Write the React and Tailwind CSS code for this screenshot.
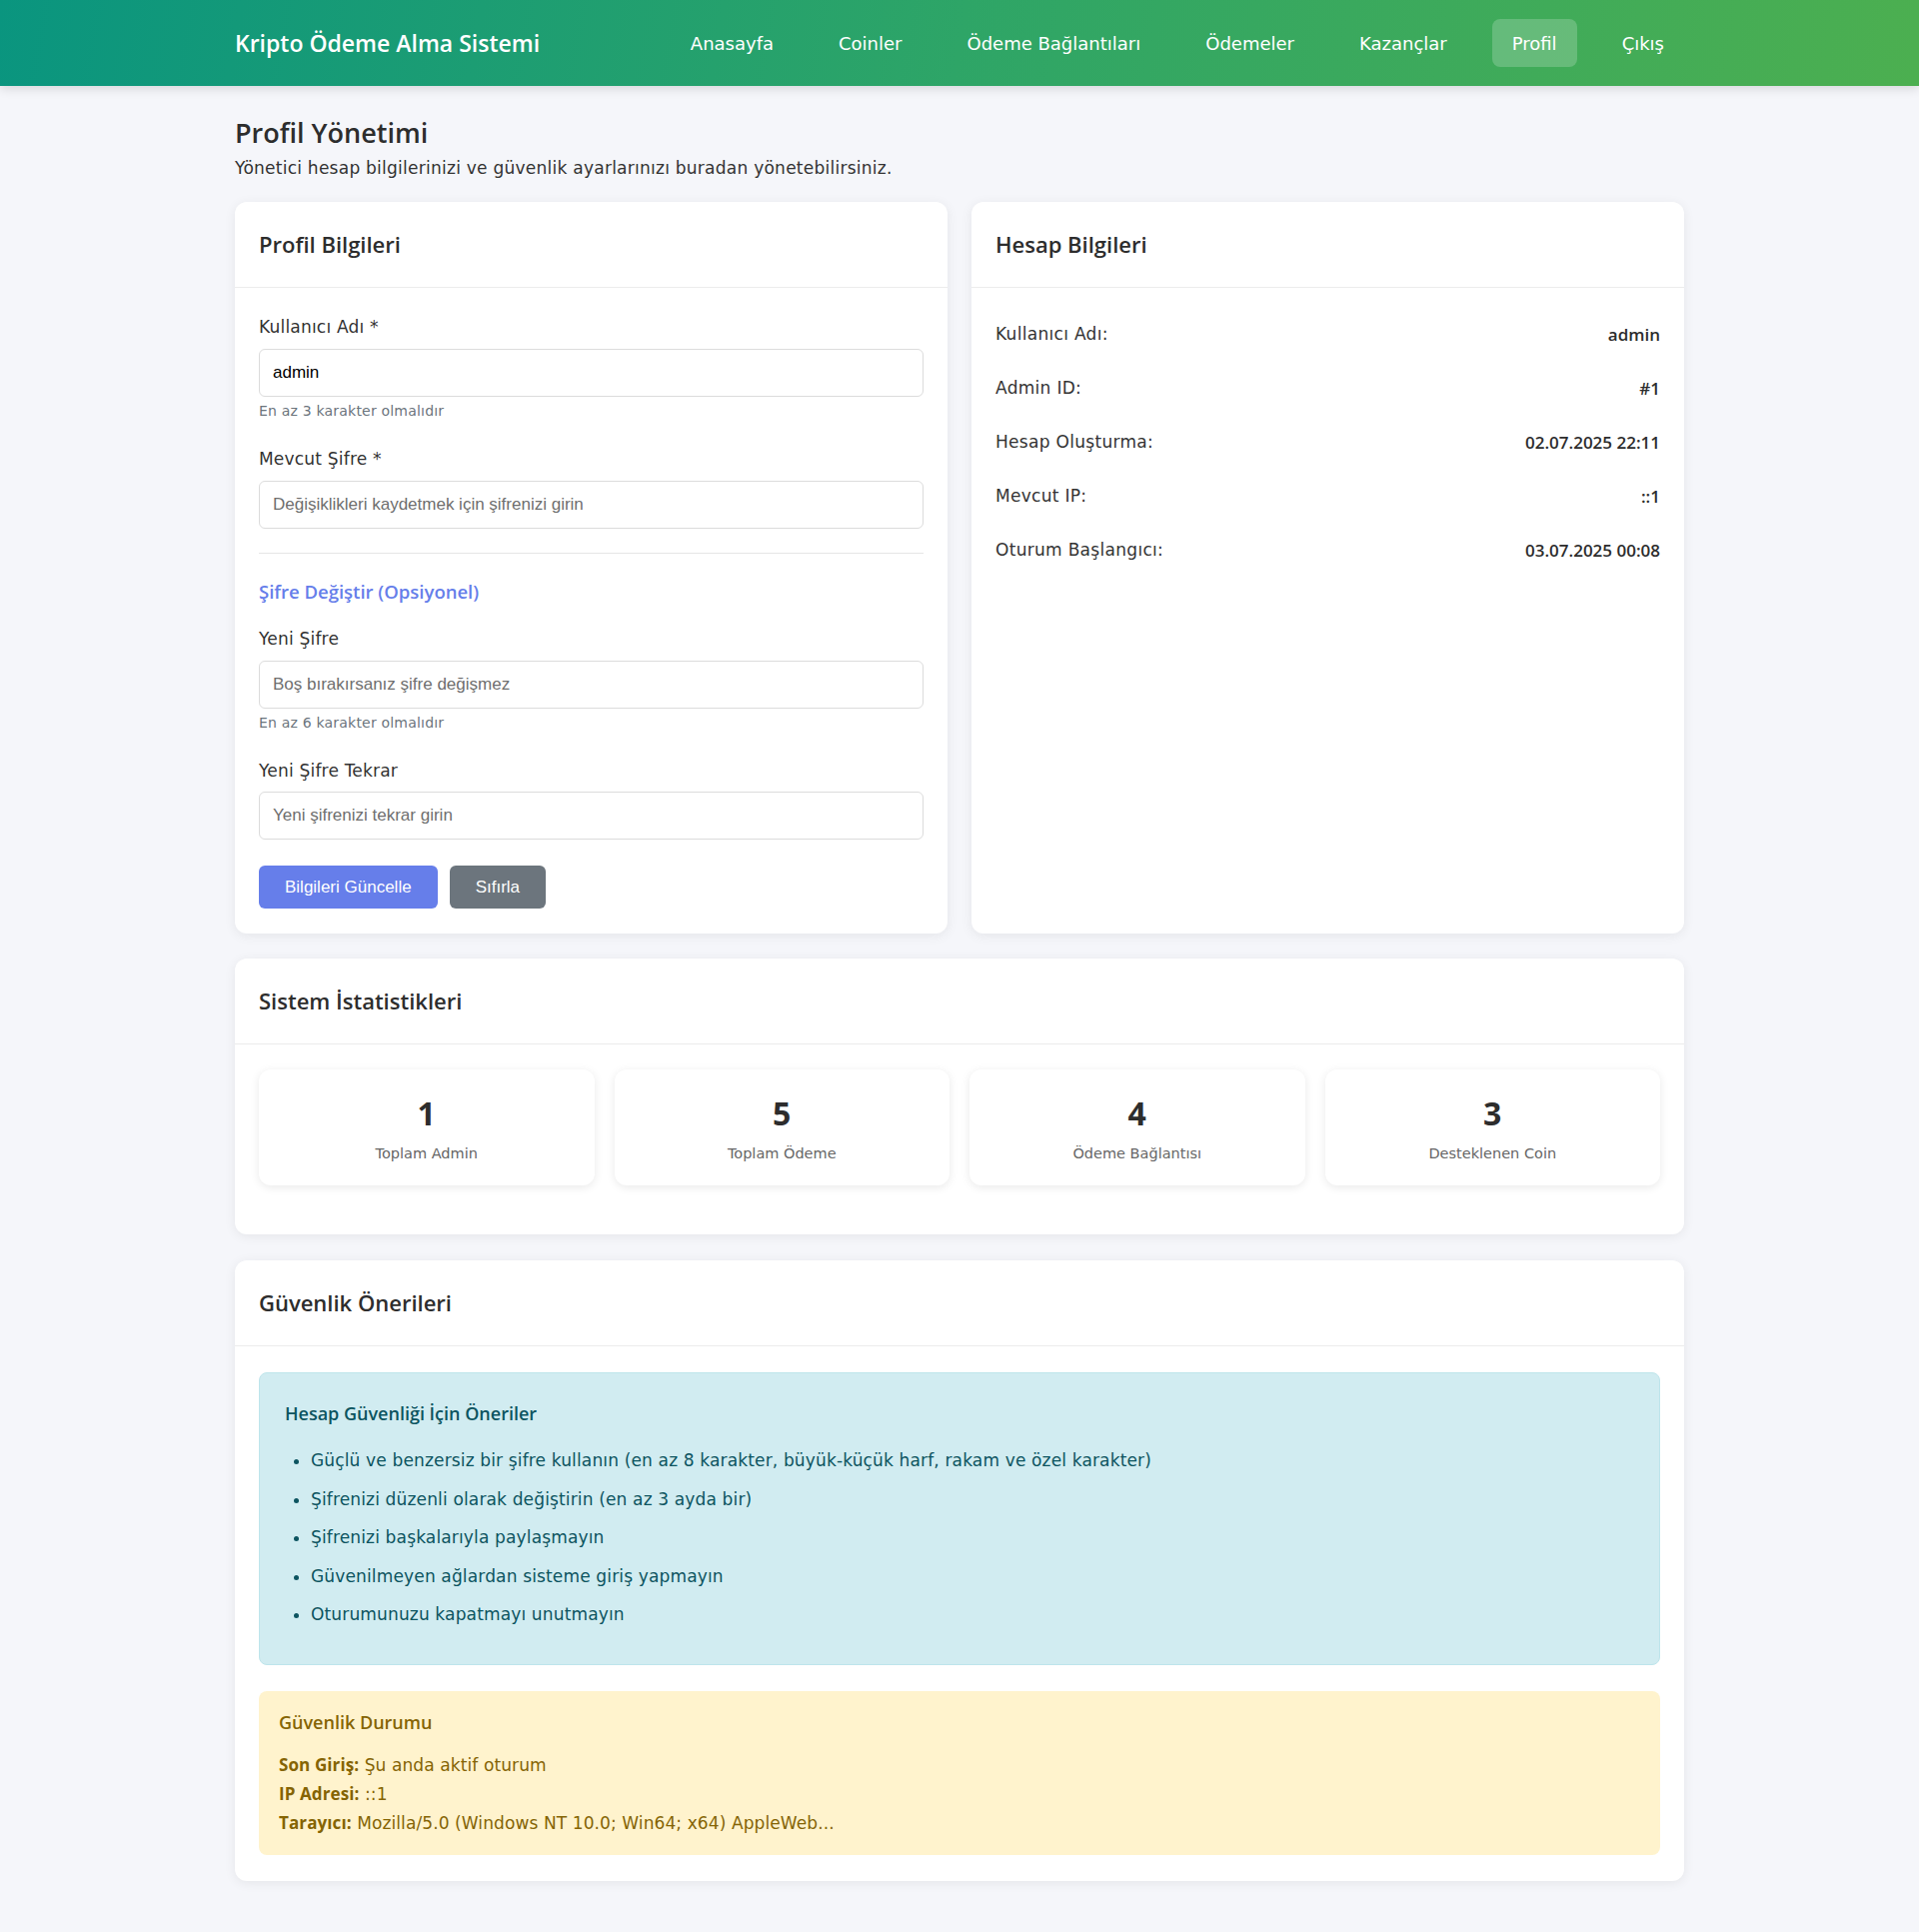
import React from 'react';

const navLinks = ['Anasayfa', 'Coinler', 'Ödeme Bağlantıları', 'Ödemeler', 'Kazançlar', 'Profil', 'Çıkış'];

const accountRows = [
  ['Kullanıcı Adı:', 'admin'],
  ['Admin ID:', '#1'],
  ['Hesap Oluşturma:', '02.07.2025 22:11'],
  ['Mevcut IP:', '::1'],
  ['Oturum Başlangıcı:', '03.07.2025 00:08'],
];

const stats = [
  ['1', 'Toplam Admin'],
  ['5', 'Toplam Ödeme'],
  ['4', 'Ödeme Bağlantısı'],
  ['3', 'Desteklenen Coin'],
];

const tips = [
  'Güçlü ve benzersiz bir şifre kullanın (en az 8 karakter, büyük-küçük harf, rakam ve özel karakter)',
  'Şifrenizi düzenli olarak değiştirin (en az 3 ayda bir)',
  'Şifrenizi başkalarıyla paylaşmayın',
  'Güvenilmeyen ağlardan sisteme giriş yapmayın',
  'Oturumunuzu kapatmayı unutmayın',
];

// headings and bold bits use Open Sans, running text uses DejaVu Sans
const head = "font-['Open_Sans',sans-serif]";

const Card = ({ title, children, className = '' }) => (
  <div className={`bg-white rounded-xl shadow-[0_2px_12px_rgba(0,0,0,0.07)] ${className}`}>
    <div className="h-[86px] px-6 flex items-center border-b border-[#ececec]">
      <h2 className={`${head} text-[22px] font-semibold text-[#2d2d2d]`}>{title}</h2>
    </div>
    {children}
  </div>
);

const inputCls =
  "block w-full h-[48px] px-[13px] rounded-md border border-[#dcdcdc] bg-white text-[17px] text-black placeholder:text-[#6f6f6f] font-['Liberation_Sans',Arial,sans-serif] outline-none";

const Label = ({ children, className = '' }) => (
  <label className={`block text-[17px] leading-6 tracking-[0.2px] text-[#333] ${className}`}>{children}</label>
);

const Help = ({ children }) => (
  <div className="mt-1 text-[14px] leading-5 tracking-[0.2px] text-[#6c757d]">{children}</div>
);

export default function App() {
  return (
    <div className="min-h-screen bg-[#f5f6fa] text-[#333] font-['DejaVu_Sans',sans-serif] pb-[51px]">
      <nav className="h-[86px] bg-[linear-gradient(100deg,#0a957f_0%,#2ea567_50%,#4caf50_100%)] shadow-[0_3px_10px_rgba(0,0,0,0.12)]">
        <div className="mx-auto w-[1450px] h-full flex items-center justify-between">
          <span className={`${head} text-[23px] font-semibold text-white`}>Kripto Ödeme Alma Sistemi</span>
          <div className="flex items-center gap-[25px]">
            {navLinks.map((l) => (
              <a
                key={l}
                className={`px-5 h-[48px] flex items-center rounded-lg text-[18px] text-white ${l === 'Profil' ? 'bg-white/20' : ''}`}
              >
                {l}
              </a>
            ))}
          </div>
        </div>
      </nav>

      <main className="mx-auto w-[1450px] pt-[30px]">
        <h1 className={`${head} text-[27px] leading-[34px] font-semibold text-[#2d2d2d]`}>Profil Yönetimi</h1>
        <p className="mt-[6px] text-[17px] leading-6 tracking-[0.25px] text-[#333]">
          Yönetici hesap bilgilerinizi ve güvenlik ayarlarınızı buradan yönetebilirsiniz.
        </p>

        <div className="mt-[22px] grid grid-cols-2 gap-6">
          <Card title="Profil Bilgileri">
            <div className="px-6 pt-[27px] pb-[25px]">
              <Label className="mb-[10px]">Kullanıcı Adı *</Label>
              <input className={inputCls} defaultValue="admin" />
              <Help>En az 3 karakter olmalıdır</Help>

              <Label className="mt-[26px] mb-[10px]">Mevcut Şifre *</Label>
              <input className={inputCls} placeholder="Değişiklikleri kaydetmek için şifrenizi girin" />

              <hr className="my-6 border-[#e6e6e6]" />

              <h3 className={`${head} text-[18.5px] leading-7 font-semibold text-[#667eea]`}>Şifre Değiştir (Opsiyonel)</h3>

              <Label className="mt-[21px] mb-[10px]">Yeni Şifre</Label>
              <input className={inputCls} placeholder="Boş bırakırsanız şifre değişmez" />
              <Help>En az 6 karakter olmalıdır</Help>

              <Label className="mt-[26px] mb-[9px]">Yeni Şifre Tekrar</Label>
              <input className={inputCls} placeholder="Yeni şifrenizi tekrar girin" />

              <div className="mt-[26px] flex gap-3 font-['Liberation_Sans',Arial,sans-serif]">
                <button className="h-[43px] px-[26px] rounded-md bg-[#667eea] text-white text-[17px]">Bilgileri Güncelle</button>
                <button className="h-[43px] px-[26px] rounded-md bg-[#6c757d] text-white text-[17px]">Sıfırla</button>
              </div>
            </div>
          </Card>

          <Card title="Hesap Bilgileri">
            <div className="px-6 pt-5">
              {accountRows.map(([k, v]) => (
                <div key={k} className="h-[54px] flex items-center justify-between">
                  <span className="text-[17px] tracking-[0.3px] text-[#333]">{k}</span>
                  <span className={`${head} text-[17px] font-semibold text-[#2d2d2d]`}>{v}</span>
                </div>
              ))}
            </div>
          </Card>
        </div>

        <Card title="Sistem İstatistikleri" className="mt-[25px]">
          <div className="px-6 pt-[25px] pb-[49px] grid grid-cols-4 gap-5">
            {stats.map(([n, l]) => (
              <div key={l} className="bg-white rounded-xl shadow-[0_2px_10px_rgba(0,0,0,0.09)] pt-6 pb-[22px] text-center">
                <div className={`${head} text-[32px] leading-10 font-bold text-[#2d2d2d]`}>{n}</div>
                <div className="mt-[10px] text-[14.5px] leading-5 text-[#666]">{l}</div>
              </div>
            ))}
          </div>
        </Card>

        <Card title="Güvenlik Önerileri" className="mt-[26px]">
          <div className="px-6 pt-[26px] pb-[26px]">
            <div className="rounded-lg bg-[#d1ecf1] border border-[#bee5eb] text-[#0c5460] px-[25px] pt-[27px] pb-[30px]">
              <h4 className={`${head} text-[18px] leading-[26px] font-semibold`}>Hesap Güvenliği İçin Öneriler</h4>
              <ul className="mt-[15px] list-disc pl-[26px] text-[17px] tracking-[0.15px]">
                {tips.map((t) => (
                  <li key={t} className="py-[7px] leading-[24.5px]">{t}</li>
                ))}
              </ul>
            </div>

            <div className="mt-[26px] rounded-lg bg-[#fff3cd] text-[#856404] px-5 pt-5 pb-[17px]">
              <h4 className={`${head} text-[18px] leading-[22px] font-semibold`}>Güvenlik Durumu</h4>
              <div className="mt-[18px] text-[17px] leading-[28px] tracking-[0.1px]">
                <div className="h-[29px]"><span className={`${head} font-bold`}>Son Giriş:</span> Şu anda aktif oturum</div>
                <div className="h-[29px]"><span className={`${head} font-bold`}>IP Adresi:</span> ::1</div>
                <div className="h-[29px]"><span className={`${head} font-bold`}>Tarayıcı:</span> Mozilla/5.0 (Windows NT 10.0; Win64; x64) AppleWeb...</div>
              </div>
            </div>
          </div>
        </Card>
      </main>
    </div>
  );
}
